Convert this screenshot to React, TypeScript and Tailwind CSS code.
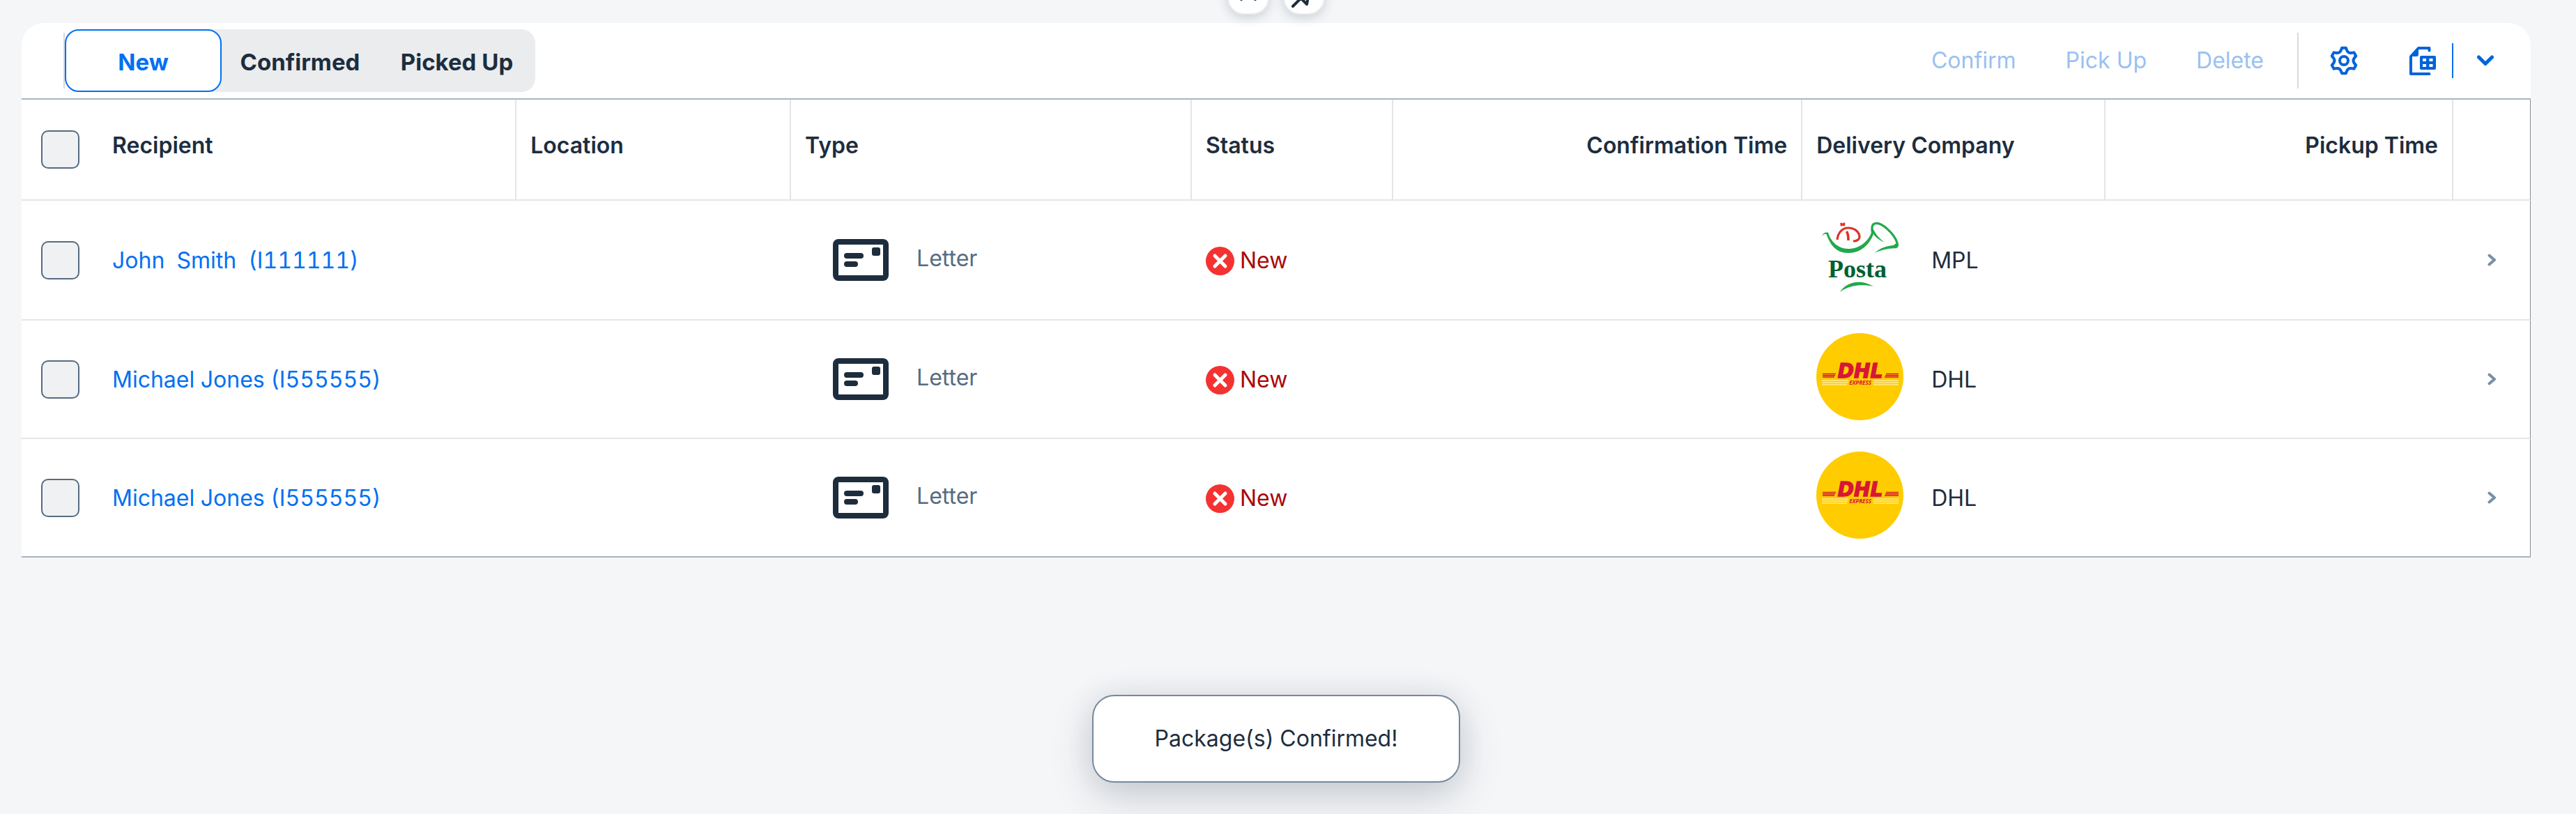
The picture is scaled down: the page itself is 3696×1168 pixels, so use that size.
import type { ReactNode } from "react";

type Carrier = "MPL" | "DHL";

interface PackageRow {
  id: number;
  recipient: string;
  type: string;
  status: string;
  carrier: Carrier;
}

const rows: PackageRow[] = [
  { id: 1, recipient: "John  Smith  (I111111)", type: "Letter", status: "New", carrier: "MPL" },
  { id: 2, recipient: "Michael Jones (I555555)", type: "Letter", status: "New", carrier: "DHL" },
  { id: 3, recipient: "Michael Jones (I555555)", type: "Letter", status: "New", carrier: "DHL" },
];

const columns = [
  { label: "Recipient", end: false },
  { label: "Location", end: false },
  { label: "Type", end: false },
  { label: "Status", end: false },
  { label: "Confirmation Time", end: true },
  { label: "Delivery Company", end: false },
  { label: "Pickup Time", end: true },
];

function gearOutline(): string {
  const point = (radius: number, degrees: number) => {
    const a = (degrees * Math.PI) / 180;
    return `${(20 + radius * Math.cos(a)).toFixed(2)} ${(21 + radius * Math.sin(a)).toFixed(2)}`;
  };
  let d = "";
  for (let i = 0; i < 6; i++) {
    const t = -90 + i * 60;
    d += `${i === 0 ? "M" : "L"}${point(15, t - 17)}L${point(18.5, t - 9)}L${point(18.5, t + 9)}L${point(15, t + 17)}`;
    d += `Q${point(12.4, t + 30)} ${point(15, t + 43)}`;
  }
  return d + "Z";
}

function GearIcon() {
  return (
    <svg width="40" height="42" viewBox="0 0 40 42" fill="none" stroke="currentColor" strokeWidth="4" strokeLinejoin="round" aria-hidden="true">
      <path d={gearOutline()} />
      <circle cx="20" cy="21" r="6" />
    </svg>
  );
}

function SpreadsheetIcon() {
  return (
    <svg width="38" height="41" viewBox="0 0 38 41" fill="none" aria-hidden="true">
      <path d="M28.5 5.5V2H13L2 14V39H28.5" stroke="currentColor" strokeWidth="4" strokeLinecap="round" strokeLinejoin="round" />
      <path d="M3 14 13 3v8a3 3 0 0 1-3 3Z" fill="currentColor" />
      <path
        fillRule="evenodd"
        fill="currentColor"
        d="M17 13h19a2 2 0 0 1 2 2v16a2 2 0 0 1-2 2H17a2 2 0 0 1-2-2V15a2 2 0 0 1 2-2ZM19 17v4h5v-4ZM28.500 17v4h5v-4ZM19 25v4h5v-4ZM28.500 25v4h5v-4Z"
      />
    </svg>
  );
}

function ChevronDown() {
  return (
    <svg width="26" height="16" viewBox="0 0 26 16" fill="none" stroke="currentColor" strokeWidth="5" strokeLinecap="round" strokeLinejoin="round" aria-hidden="true">
      <path d="M3.500 3 13 12.500 22.500 3" />
    </svg>
  );
}

function ChevronRight() {
  return (
    <svg width="13" height="18" viewBox="0 0 13 18" fill="none" stroke="currentColor" strokeWidth="4" strokeLinecap="round" strokeLinejoin="round" aria-hidden="true">
      <path d="M2.500 2.500 10 9 2.500 15.500" />
    </svg>
  );
}

function LetterIcon() {
  return (
    <svg width="80" height="60" viewBox="0 0 80 60" className="shrink-0" aria-hidden="true">
      <rect x="4" y="4" width="72" height="52" rx="4" fill="none" stroke="currentColor" strokeWidth="8" />
      <rect x="16" y="20" width="28" height="8" rx="4" fill="currentColor" />
      <rect x="16" y="32" width="20" height="8" rx="4" fill="currentColor" />
      <rect x="56" y="12" width="12" height="12" rx="3" fill="currentColor" />
    </svg>
  );
}

function ErrorIcon() {
  return (
    <svg width="41" height="41" viewBox="0 0 41 41" className="shrink-0" aria-hidden="true">
      <circle cx="20.500" cy="20.500" r="20.500" fill="#f53232" />
      <path d="M13 13 28 28M28 13 13 28" stroke="#fff" strokeWidth="5" strokeLinecap="round" />
    </svg>
  );
}

function PostaLogo() {
  return (
    <svg width="125" height="125" viewBox="0 0 125 125" className="shrink-0" aria-hidden="true">
      <g fill="#22a84c">
        <path d="M8 32C9 28 12 26 17 26.500C20 38 30 50 46 50C62 50 74 40 79.500 26L82 29C76 44 64 56 46 56C28 56 20 44 14.500 29C12 28.500 10 29 8 32Z" />
        <path d="M113 43 118 42C118.500 48 116 49.500 112 49.300C102 49.500 92 52 83.500 56C92 48.500 102 45.500 111 45Z" />
        <path d="M79.500 16C83 27 89 34 97.500 40.500C88 37 80 29 78.800 22Z" />
        <path d="M34 112C42 99 62 92 82 104C68 101 48 101 34 112Z" />
      </g>
      <path d="M80.500 28C79 20 80 14.500 84 13.800C94 11 112 29 115.800 41C116.500 44 115 46.500 112 47" fill="none" stroke="#22a84c" strokeWidth="3.200" />
      <g fill="none" stroke="#de3229">
        <path d="M30 37C31 27 37 20 46 20C56 20 62 27 62 33C62 36 59 39 53 39" strokeWidth="3.200" />
        <path d="M43.500 25C45.500 28 46 32 46 38" strokeWidth="3.600" />
        <path d="M34.500 13.500 41 16.500M35 17 41 13" strokeWidth="2.600" />
      </g>
      <text x="59" y="91" textAnchor="middle" fill="#00602f" fontFamily="Liberation Serif, serif" fontWeight="700" fontSize="36">
        Posta
      </text>
    </svg>
  );
}

function DhlLogo() {
  return (
    <svg width="125" height="125" viewBox="0 0 125 125" className="shrink-0" aria-hidden="true">
      <circle cx="62.500" cy="62.500" r="62.500" fill="#fc0" />
      <path d="M9 58.500H28M9 60.800H27M9 63.100H26M100 58.500H118M99 60.800H118M98 63.100H118" stroke="#d81635" strokeWidth="1.500" />
      <path d="M8 68H46M8 71H45M8 74H44M82 68H118M82 71H118M82 74H118" stroke="#ffea94" strokeWidth="1.300" />
      <text x="63" y="64" textAnchor="middle" fill="#d81635" stroke="#d81635" strokeWidth="1.500" fontFamily="DejaVu Sans, sans-serif" fontWeight="700" fontStyle="italic" fontSize="28">
        DHL
      </text>
      <text x="63" y="74" textAnchor="middle" fill="#d81635" fontFamily="Open Sans, sans-serif" fontWeight="700" fontStyle="italic" fontSize="8">
        EXPRESS
      </text>
    </svg>
  );
}

function Checkbox({ label }: { label: string }) {
  return (
    <input
      type="checkbox"
      aria-label={label}
      className="block size-[55px] appearance-none rounded-[10px] border-2 border-[#556b82] bg-[#eff1f2] checked:bg-[#0070f2]"
    />
  );
}

function HeaderAction({ label, children }: { label: string; children: ReactNode }) {
  return (
    <button
      type="button"
      aria-label={label}
      className="-mt-[39px] size-[60px] rounded-[24px] border-2 border-[#eaecee] bg-white shadow-[0_4px_16px_rgba(34,53,72,0.2)]"
    >
      {children}
    </button>
  );
}

function Toolbar() {
  return (
    <div className="flex h-[110px] items-center justify-between rounded-t-[32px] border-b-2 border-[#a8b5bf] bg-white">
      <div className="flex items-center pl-[60px]">
        <span className="h-20 w-[2px] bg-[#d9d9d9]" />
        <div role="group" aria-label="Package status" className="grid h-[90px] w-[675px] grid-cols-3 rounded-[20px] bg-[#eaecee] text-[33px] font-bold">
          <button type="button" aria-pressed="true" className="rounded-[20px] border-2 border-[#0070f2] bg-white pt-1 text-[#0070f2]">
            New
          </button>
          <button type="button" aria-pressed="false" className="pt-1">
            Confirmed
          </button>
          <button type="button" aria-pressed="false" className="pt-1">
            Picked Up
          </button>
        </div>
      </div>
      <div className="flex items-center pr-5">
        <div className="flex gap-[71px] pr-12 text-[#99c1f0]">
          <button type="button" disabled>
            Confirm
          </button>
          <button type="button" disabled>
            Pick Up
          </button>
          <button type="button" disabled>
            Delete
          </button>
        </div>
        <span className="h-20 w-[2px] bg-[#d9d9d9]" />
        <div className="flex items-center pl-5 text-[#0064d9]">
          <button type="button" aria-label="Settings" className="flex h-[72px] w-[90px] items-center justify-center">
            <GearIcon />
          </button>
          <button type="button" aria-label="Export to spreadsheet" className="ml-[26px] flex h-[72px] w-[84px] items-center justify-center">
            <SpreadsheetIcon />
          </button>
          <span className="h-[50px] w-[2px] bg-[#0070f2]" />
          <button type="button" aria-label="More export options" className="flex h-[72px] w-[91px] items-center justify-center">
            <ChevronDown />
          </button>
        </div>
      </div>
    </div>
  );
}

function PackageTable() {
  return (
    <table className="w-full table-fixed border-separate border-spacing-0 bg-white">
      <colgroup>
        <col className="w-[110px]" />
        <col />
        <col className="w-[10.94%]" />
        <col className="w-[15.97%]" />
        <col className="w-[8.03%]" />
        <col className="w-[16.31%]" />
        <col className="w-[12.08%]" />
        <col className="w-[13.86%]" />
        <col className="w-[111px]" />
      </colgroup>
      <thead>
        <tr className="h-[145px]">
          <th className="border-b-2 border-[#e5e5e5] pl-7">
            <Checkbox label="Select all packages" />
          </th>
          {columns.map((c) => (
            <th
              key={c.label}
              scope="col"
              className={`border-r-2 border-b-2 border-[#e5e5e5] px-5 pb-3 font-semibold whitespace-nowrap ${c.end ? "text-right" : "text-left"}`}
            >
              {c.label}
            </th>
          ))}
          <th className="border-r border-b-2 border-r-[#8c8c8c] border-b-[#e5e5e5]" aria-label="Details" />
        </tr>
      </thead>
      <tbody className="[&>tr:last-child>td]:border-b-[#a9b4be]">
        {rows.map((r) => (
          <tr key={r.id} className="h-[170px] first:h-[172px] [&>td]:border-b-2 [&>td]:border-b-[#e5e5e5]">
            <td className="pl-7">
              <Checkbox label={`Select package ${r.id}, ${r.recipient}`} />
            </td>
            <td className="px-5 pt-[2px]">
              <a href={`#package-${r.id}`} className="whitespace-pre text-[#0070f2] tabular-nums">
                {r.recipient}
              </a>
            </td>
            <td />
            <td className="px-5">
              <div className="flex items-center gap-10 pl-10">
                <LetterIcon />
                <span className="pb-1 text-[#556b82]">{r.type}</span>
              </div>
            </td>
            <td className="px-5 pt-[2px]">
              <div className="flex items-center gap-2 text-[#aa0808]">
                <ErrorIcon />
                {r.status}
              </div>
            </td>
            <td />
            <td className="px-5">
              <div className="flex items-center gap-10">
                <div className="pb-2">{r.carrier === "MPL" ? <PostaLogo /> : <DhlLogo />}</div>
                <span className="pt-[2px]">{r.carrier}</span>
              </div>
            </td>
            <td />
            <td className="border-r border-r-[#8c8c8c]">
              <button type="button" aria-label={`Open package ${r.id}`} className="flex w-full justify-center text-[#788fa6]">
                <ChevronRight />
              </button>
            </td>
          </tr>
        ))}
      </tbody>
    </table>
  );
}

export default function App() {
  return (
    <div className="min-h-screen bg-[#f5f6f8] pr-[65px] pl-[31px] font-['Inter',sans-serif] text-[32px] leading-10 text-[#1d2d3e]">
      <header className="flex h-[33px] items-start justify-center gap-5">
        <HeaderAction label="Collapse header">
          <svg viewBox="2 2 56 56" fill="none" stroke="currentColor" strokeWidth="4" strokeLinecap="round" strokeLinejoin="round" aria-hidden="true">
            <path d="M20 38 30 28 40 38M20 26 30 16 40 26" />
          </svg>
        </HeaderAction>
        <HeaderAction label="Pin header">
          <svg viewBox="2 2 56 56" fill="none" stroke="currentColor" strokeWidth="4" strokeLinecap="round" strokeLinejoin="round" aria-hidden="true">
            <path d="M14 48 26 36M17 28 34 45 36 34 44 26 34 16 26 25Z" />
          </svg>
        </HeaderAction>
      </header>
      <main>
        <Toolbar />
        <PackageTable />
        <div className="mt-[197px] flex justify-center">
          <div
            role="status"
            className="rounded-[32px] border-2 border-[#75899f] bg-white px-[88px] py-[41px] shadow-[0_20px_60px_rgba(34,53,72,0.2),0_0_40px_rgba(34,53,72,0.08)]"
          >
            Package(s) Confirmed!
          </div>
        </div>
      </main>
    </div>
  );
}
